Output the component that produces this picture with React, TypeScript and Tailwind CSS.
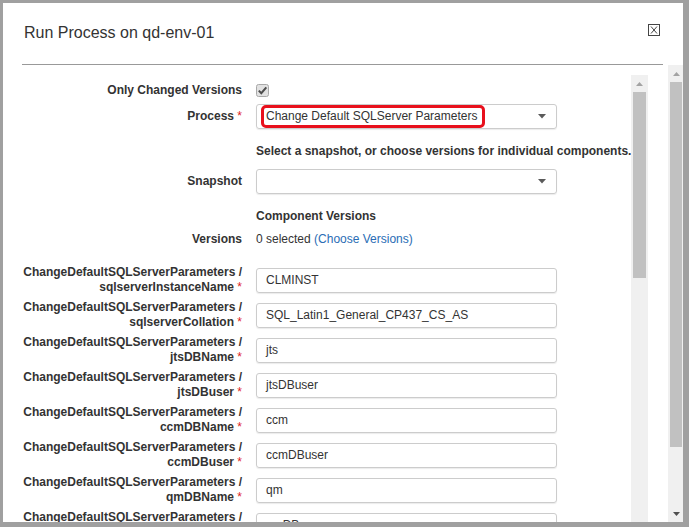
import React from "react";

const params = [
  { name: "sqlserverInstanceName", value: "CLMINST" },
  { name: "sqlserverCollation", value: "SQL_Latin1_General_CP437_CS_AS" },
  { name: "jtsDBName", value: "jts" },
  { name: "jtsDBuser", value: "jtsDBuser" },
  { name: "ccmDBName", value: "ccm" },
  { name: "ccmDBuser", value: "ccmDBuser" },
  { name: "qmDBName", value: "qm" },
  { name: "qmDBuser", value: "qmDBuser" },
];

const Req = () => <span className="font-normal text-[#e02424]"> *</span>;

const Caret = () => (
  <svg width="8" height="5" viewBox="0 0 8 5" className="mr-[10px]">
    <polygon points="0,0 8,0 4,4.5" fill="#5a5a5a" />
  </svg>
);

const Arrow = ({ down, dark }: { down?: boolean; dark?: boolean }) => (
  <svg width="7" height="4" viewBox="0 0 7 4">
    <polygon
      points={down ? "0,0 7,0 3.5,4" : "0,4 7,4 3.5,0"}
      fill={dark ? "#505050" : "#a3a3a3"}
    />
  </svg>
);

const App = () => {
  return (
    <div className="h-[527px] w-[689px] bg-[#a0a0a0] pb-[5px] pl-[3px] pr-[6px] pt-[3px] font-['Liberation_Sans',Arial,sans-serif] text-[#333]">
      <div className="flex h-full flex-col overflow-hidden bg-white">
        {/* header */}
        <div className="ml-[19px] mr-[20px] flex h-[62px] shrink-0 items-start justify-between border-b border-[#999] pt-[21px]">
          <h4 className="pl-[2px] text-[16px] leading-[18px]">Run Process on qd-env-01</h4>
          <svg width="12" height="12" viewBox="0 0 12 12" className="mr-[3px] mt-[0px]">
            <rect x="0.5" y="0.5" width="11" height="11" fill="none" stroke="#444" />
            <path d="M3 2.5 L9 9.5 M9 2.5 L3 9.5" stroke="#444" strokeWidth="1" />
          </svg>
        </div>

        <div className="flex min-h-0 flex-1">
          <div className="flex min-h-0 flex-1 pt-[10px]">
            <div className="ml-[19px] flex min-h-0 flex-1 overflow-hidden">
              {/* form */}
              <div className="flex-1 text-[12px] leading-[15px]">
                <div className="mt-[7px] flex h-[16px] items-center">
                  <label className="w-[220px] text-right font-bold">Only Changed Versions</label>
                  <svg width="13" height="13" viewBox="0 0 13 13" className="ml-[14px]">
                    <rect x="0.5" y="0.5" width="12" height="12" rx="2" fill="#e2e2e2" stroke="#a9a9a9" />
                    <path d="M2.8 6.6 L5.3 9.2 L10.3 3.4" fill="none" stroke="#4d4d4d" strokeWidth="2" />
                  </svg>
                </div>

                <div className="mt-[6px] flex items-center">
                  <label className="w-[220px] text-right font-bold">
                    Process
                    <Req />
                  </label>
                  <div className="ml-[14px] flex h-[25px] w-[301px] items-center justify-between rounded-[3px] border border-[#ccc] pl-[4px] shadow-[0_1px_1px_rgba(0,0,0,0.08)]">
                    <span className="flex h-[23px] items-center rounded-[5px] border-[3px] border-[#e8101c] pl-[2px] pr-[5px]">
                      Change Default SQLServer Parameters
                    </span>
                    <Caret />
                  </div>
                </div>

                <div className="mt-[15px] flex">
                  <div className="w-[220px]" />
                  <div className="ml-[14px] whitespace-nowrap font-bold">
                    Select a snapshot, or choose versions for individual components.
                  </div>
                </div>

                <div className="mt-[10px] flex items-center">
                  <label className="w-[220px] text-right font-bold">Snapshot</label>
                  <div className="ml-[14px] flex h-[25px] w-[301px] items-center justify-end rounded-[3px] border border-[#ccc] shadow-[0_1px_1px_rgba(0,0,0,0.08)]">
                    <Caret />
                  </div>
                </div>

                <div className="mt-[15px] flex">
                  <div className="w-[220px]" />
                  <div className="ml-[14px] font-bold">Component Versions</div>
                </div>

                <div className="mt-[8px] flex">
                  <label className="w-[220px] text-right font-bold">Versions</label>
                  <div className="ml-[14px]">
                    0 selected <span className="text-[#2a6db5]">(Choose Versions)</span>
                  </div>
                </div>

                <div className="mt-[18px] flex flex-col gap-[5px]">
                  {params.map((p) => (
                    <div key={p.name} className="flex items-center">
                      <label className="w-[220px] whitespace-nowrap text-right font-bold">
                        <span className="block">ChangeDefaultSQLServerParameters /</span>
                        <span className="block">
                          {p.name}
                          <Req />
                        </span>
                      </label>
                      <div className="ml-[14px] flex h-[25px] w-[301px] items-center rounded-[3px] border border-[#ccc] pl-[9px] shadow-[0_1px_1px_rgba(0,0,0,0.08)]">
                        {p.value}
                      </div>
                    </div>
                  ))}
                </div>
              </div>

              {/* inner scrollbar */}
              <div className="flex w-[17px] shrink-0 flex-col items-center bg-[#f0f0f0]">
                <div className="flex h-[17px] items-center justify-center">
                  <Arrow />
                </div>
                <div className="h-[186px] w-[13px] bg-[#c1c1c1]" />
              </div>
            </div>
            <div className="w-[20px] shrink-0" />
          </div>

          {/* outer scrollbar */}
          <div className="flex w-[16px] shrink-0 flex-col items-center bg-[#f0f0f0]">
            <div className="flex h-[17px] items-center justify-center">
              <Arrow />
            </div>
            <div className="h-[365px] w-[12px] bg-[#c1c1c1]" />
            <div className="flex-1" />
            <div className="flex h-[17px] items-center justify-center">
              <Arrow down dark />
            </div>
          </div>
        </div>
      </div>
    </div>
  );
};

export default App;
